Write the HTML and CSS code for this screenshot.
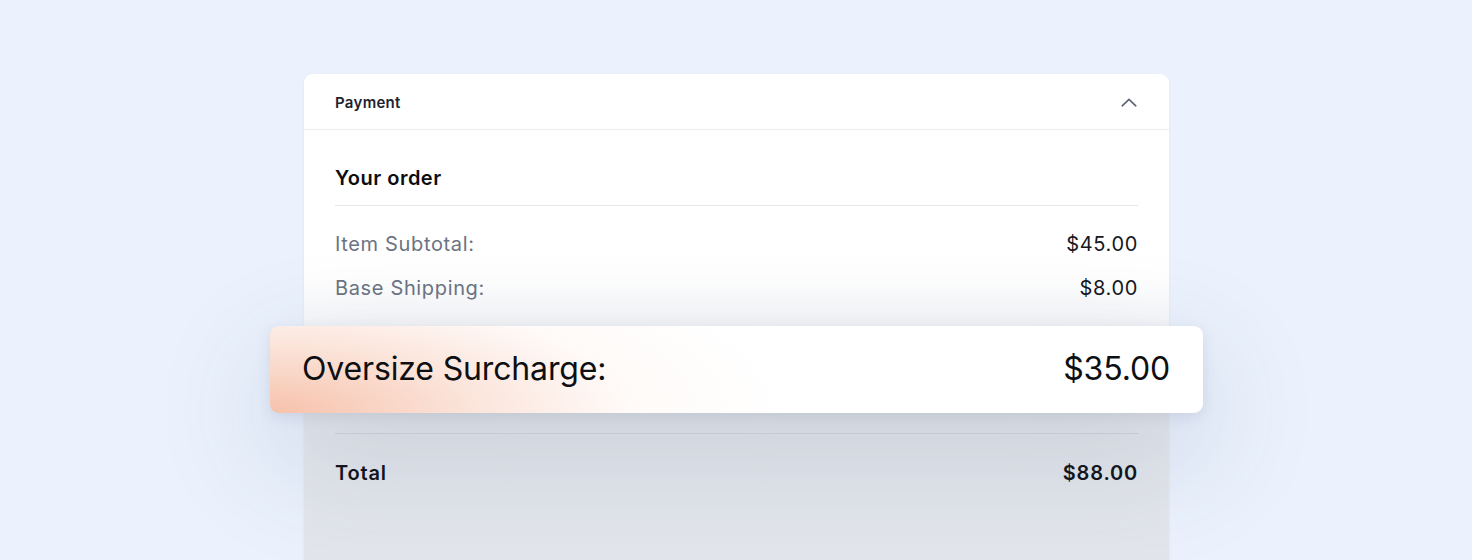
FILE: index.html
```html
<!DOCTYPE html>
<html lang="en">
<head>
<meta charset="utf-8">
<title>Payment</title>
<link rel="stylesheet" href="styles.css">
</head>
<body>
  <main class="stage">
    <section class="card">
      <header class="card-header">
        <span class="card-title">Payment</span>
        <svg class="chevron" width="16" height="9" viewBox="0 0 16 9" aria-hidden="true">
          <path d="M1.2 7.8 L8 1.4 L14.8 7.8" fill="none" stroke="#5b6270" stroke-width="1.6" stroke-linecap="round" stroke-linejoin="round"/>
        </svg>
      </header>
      <div class="card-body">
        <h2 class="order-title">Your order</h2>
        <div class="rows">
          <div class="row"><span class="label">Item Subtotal:</span><span class="value">$45.00</span></div>
          <div class="row"><span class="label">Base Shipping:</span><span class="value">$8.00</span></div>
        </div>
        <div class="highlight">
          <span class="hl-label">Oversize Surcharge:</span>
          <span class="hl-value">$35.00</span>
        </div>
        <div class="total">
          <span>Total</span>
          <span>$88.00</span>
        </div>
      </div>
    </section>
  </main>
</body>
</html>
```
FILE: styles.css
```css
* { box-sizing: border-box; }

html, body {
  margin: 0;
  height: 100%;
}

body {
  background: #ebf2fd;
  font-family: Inter, "Noto Sans", "Liberation Sans", sans-serif;
  overflow: hidden;
}

.stage {
  display: flex;
  justify-content: center;
  padding-top: 74px;
  padding-left: 1px;
}

.card {
  width: 865px;
  height: 560px;
  border-radius: 9px 9px 0 0;
  background: linear-gradient(to bottom,
    #ffffff 0px,
    #ffffff 205px,
    #f8f9fb 240px,
    #eceef2 300px,
    #e6e9ee 360px,
    #e2e5eb 486px);
  box-shadow: 0 1px 3px rgba(60, 80, 120, 0.06);
}

.card-header {
  height: 56px;
  display: flex;
  align-items: center;
  justify-content: space-between;
  padding: 2px 32px 0 31px;
  border-bottom: 1px solid #e9ecf0;
}

.card-title {
  font-size: 15px;
  font-weight: 600;
  color: #1e2330;
  letter-spacing: 0.3px;
}

.chevron {
  display: block;
}

.card-body {
  padding: 33px 31px 0 31px;
}

.order-title {
  margin: 0;
  font-size: 20px;
  font-weight: 600;
  color: #0c0d10;
  line-height: 30px;
  padding-bottom: 12px;
  border-bottom: 1px solid #e4e7eb;
  letter-spacing: 0.5px;
}

.rows {
  padding-top: 16px;
  display: flex;
  flex-direction: column;
}

.row {
  display: flex;
  justify-content: space-between;
  align-items: center;
  height: 44px;
  font-size: 20px;
  letter-spacing: 0.65px;
}

.label { color: #6b7383; }
.value { color: #16181d; }

.highlight {
  margin: 16px -65px 0 -65px;
  height: 87px;
  border-radius: 9px;
  display: flex;
  align-items: center;
  justify-content: space-between;
  padding: 0 33px 2px 32px;
  background:
    radial-gradient(ellipse 520px 175px at 0% 100%, rgba(246, 190, 166, 0.95) 0%, rgba(249, 212, 196, 0.6) 40%, rgba(253, 238, 231, 0.25) 70%, rgba(255, 255, 255, 0) 100%),
    #ffffff;
  box-shadow:
    0 4px 14px rgba(40, 60, 100, 0.10),
    0 40px 120px rgba(50, 70, 110, 0.20);
  position: relative;
  z-index: 1;
}

.hl-label,
.hl-value {
  font-size: 32px;
  color: #0e0f12;
  letter-spacing: -0.15px;
}

.total {
  margin-top: 20px;
  border-top: 1px solid #d3d7de;
  height: 78px;
  display: flex;
  justify-content: space-between;
  align-items: center;
  font-size: 20px;
  font-weight: 600;
  color: #111318;
  letter-spacing: 0.8px;
}
```
